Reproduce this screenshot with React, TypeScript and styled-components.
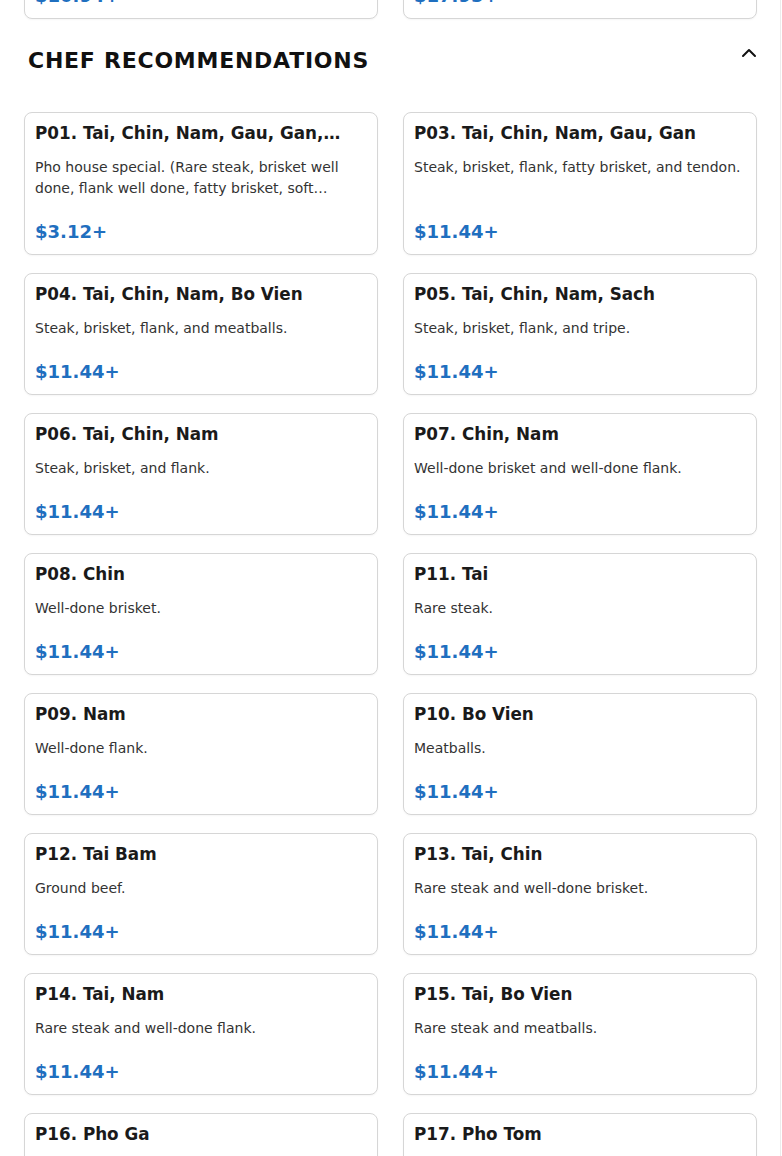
import styled, { createGlobalStyle } from "styled-components";
import { ChevronUp } from "lucide-react";

interface MenuItem {
  code: string;
  name: string;
  description: string;
  price: string;
}

interface MenuSection {
  title: string;
  items: MenuItem[];
}

const sections: MenuSection[] = [
  {
    title: "COMBO PLATES",
    items: [
      { code: "C07", name: "Grilled Pork Combo", description: "Grilled pork, spring roll, and rice.", price: "$10.94+" },
      { code: "C08", name: "Family Combo", description: "Two pho, two spring rolls, and drinks.", price: "$17.95+" },
    ],
  },
  {
    title: "CHEF RECOMMENDATIONS",
    items: [
      { code: "P01", name: "Tai, Chin, Nam, Gau, Gan, Sach, Bo Vien", description: "Pho house special. (Rare steak, brisket well done, flank well done, fatty brisket, soft tendon, tripe, and meatballs.)", price: "$3.12+" },
      { code: "P03", name: "Tai, Chin, Nam, Gau, Gan", description: "Steak, brisket, flank, fatty brisket, and tendon.", price: "$11.44+" },
      { code: "P04", name: "Tai, Chin, Nam, Bo Vien", description: "Steak, brisket, flank, and meatballs.", price: "$11.44+" },
      { code: "P05", name: "Tai, Chin, Nam, Sach", description: "Steak, brisket, flank, and tripe.", price: "$11.44+" },
      { code: "P06", name: "Tai, Chin, Nam", description: "Steak, brisket, and flank.", price: "$11.44+" },
      { code: "P07", name: "Chin, Nam", description: "Well-done brisket and well-done flank.", price: "$11.44+" },
      { code: "P08", name: "Chin", description: "Well-done brisket.", price: "$11.44+" },
      { code: "P11", name: "Tai", description: "Rare steak.", price: "$11.44+" },
      { code: "P09", name: "Nam", description: "Well-done flank.", price: "$11.44+" },
      { code: "P10", name: "Bo Vien", description: "Meatballs.", price: "$11.44+" },
      { code: "P12", name: "Tai Bam", description: "Ground beef.", price: "$11.44+" },
      { code: "P13", name: "Tai, Chin", description: "Rare steak and well-done brisket.", price: "$11.44+" },
      { code: "P14", name: "Tai, Nam", description: "Rare steak and well-done flank.", price: "$11.44+" },
      { code: "P15", name: "Tai, Bo Vien", description: "Rare steak and meatballs.", price: "$11.44+" },
      { code: "P16", name: "Pho Ga", description: "Chicken noodle soup.", price: "$11.44+" },
      { code: "P17", name: "Pho Tom", description: "Shrimp noodle soup.", price: "$12.48+" },
    ],
  },
];

const GlobalStyle = createGlobalStyle`
  * {
    box-sizing: border-box;
  }
  body {
    margin: 0;
    background: #fff;
    font-family: "DejaVu Sans", Verdana, sans-serif;
    overflow: hidden;
  }
`;

// the page is shown scrolled down, so the first section sits above the fold
const Page = styled.div`
  width: 781px;
  margin-top: -174px;
  padding: 0 23px 40px 24px;
  border-right: 1px solid #ececec;
`;

const Section = styled.section`
  & + & {
    margin-top: 22px;
  }
`;

const SectionHeader = styled.div`
  display: flex;
  justify-content: space-between;
  align-items: flex-start;
  margin: 0 -4px 31px 4px;
`;

const SectionTitle = styled.h2`
  margin: 0;
  font-size: 22px;
  line-height: 40px;
  font-weight: 700;
  letter-spacing: 0.75px;
  color: #111;
`;

const ToggleButton = styled.button`
  display: flex;
  padding: 0;
  border: none;
  background: none;
  color: #111;
  cursor: pointer;
`;

const Grid = styled.div`
  display: grid;
  grid-template-columns: 1fr 1fr;
  column-gap: 25px;
  row-gap: 18px;
`;

const Card = styled.div`
  display: flex;
  flex-direction: column;
  min-width: 0;
  padding: 10px 10px 9px;
  border: 1px solid #d6d6d6;
  border-radius: 8px;
  background: #fff;
  box-shadow: 0 1px 2px rgba(0, 0, 0, 0.04);
`;

const ItemName = styled.div`
  padding-right: 23px;
  font-size: 16.8px;
  line-height: 20px;
  font-weight: 700;
  color: #1a1a1a;
  white-space: nowrap;
  overflow: hidden;
  text-overflow: ellipsis;
`;

const Description = styled.p`
  margin: 14px 0 19px;
  font-size: 14px;
  line-height: 21px;
  color: #333;
  display: -webkit-box;
  -webkit-line-clamp: 2;
  -webkit-box-orient: vertical;
  overflow: hidden;
`;

const Price = styled.div`
  margin-top: auto;
  font-size: 18px;
  line-height: 27px;
  font-weight: 700;
  color: #1f6fbf;
`;

const ItemCard = ({ item }: { item: MenuItem }) => (
  <Card>
    <ItemName>
      {item.code}. {item.name}
    </ItemName>
    <Description>{item.description}</Description>
    <Price>{item.price}</Price>
  </Card>
);

export default function App() {
  return (
    <>
      <GlobalStyle />
      <Page>
        {sections.map((section) => (
          <Section key={section.title}>
            <SectionHeader>
              <SectionTitle>{section.title}</SectionTitle>
              <ToggleButton aria-label="Collapse section">
                <ChevronUp size={24} strokeWidth={2} />
              </ToggleButton>
            </SectionHeader>
            <Grid>
              {section.items.map((item) => (
                <ItemCard key={item.code} item={item} />
              ))}
            </Grid>
          </Section>
        ))}
      </Page>
    </>
  );
}
